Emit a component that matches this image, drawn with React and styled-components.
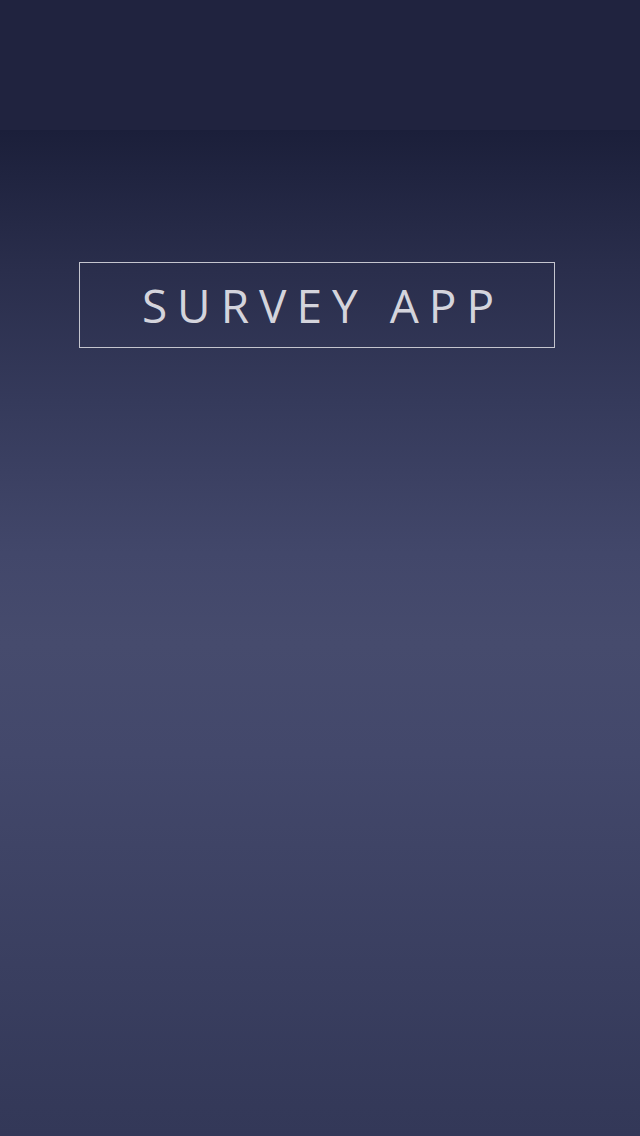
import React from 'react'
import styled, { createGlobalStyle } from 'styled-components'

const GlobalStyle = createGlobalStyle`
  html, body { margin: 0; padding: 0; }
  body { font-family: "Open Sans", "Liberation Sans", sans-serif; background: #20233f; }
`

const Screen = styled.div`
  width: 640px;
  height: 1136px;
  display: flex;
  flex-direction: column;
  overflow: hidden;
`

const TopBar = styled.div`
  height: 130px;
  flex-shrink: 0;
  background: #20233f;
`

const Body = styled.div`
  flex: 1;
  display: flex;
  flex-direction: column;
  align-items: center;
  padding-top: 132px;
  background: linear-gradient(
    to bottom,
    #1b1f3a 0%,
    #2a2e4c 14%,
    #353a5b 27%,
    #42476a 42%,
    #464b6d 51%,
    #43486b 62%,
    #3f4466 71%,
    #343959 97%,
    #333858 100%
  );
`

const TitleBox = styled.div`
  width: 474px;
  height: 84px;
  margin-left: -6px;
  border: 1px solid #c4c5ce;
  display: flex;
  align-items: center;
  justify-content: center;
`

const Title = styled.h1`
  margin: 0;
  padding-left: 12px;
  font-size: 46px;
  font-weight: 400;
  letter-spacing: 10px;
  color: #d4d4dc;
  line-height: 1;
`

export default function App() {
  return (
    <>
      <GlobalStyle />
      <Screen>
        <TopBar />
        <Body>
          <TitleBox>
            <Title>SURVEY APP</Title>
          </TitleBox>
        </Body>
      </Screen>
    </>
  )
}
